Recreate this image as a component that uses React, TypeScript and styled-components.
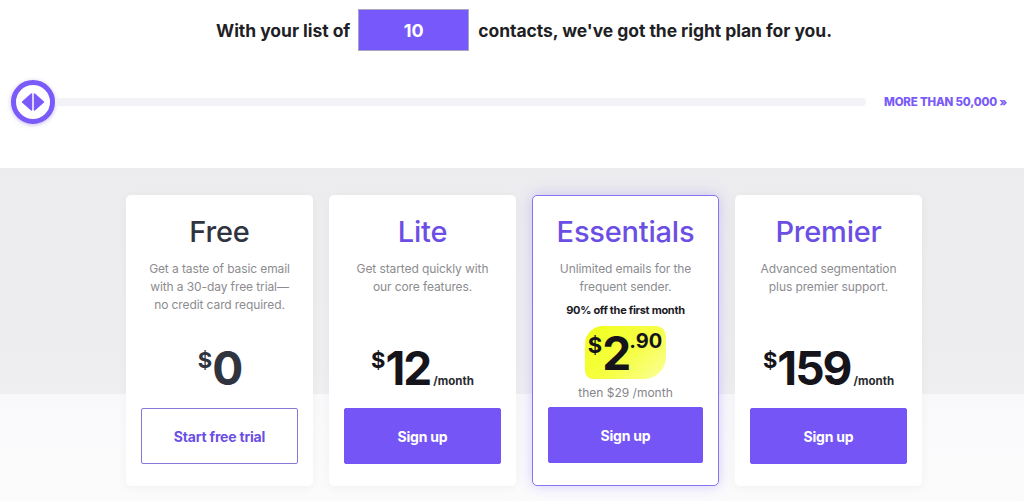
import React from "react";
import styled, { createGlobalStyle, css } from "styled-components";

const GlobalStyle = createGlobalStyle`
  html, body {
    margin: 0;
    padding: 0;
    background: #ffffff;
    font-family: "Inter", "Liberation Sans", sans-serif;
    color: #241c15;
  }
  * { box-sizing: border-box; }
`;

const PURPLE = "#7655f6";

const Page = styled.div`
  width: 1024px;
  height: 501px;
  overflow: hidden;
  display: flex;
  flex-direction: column;
`;

const Headline = styled.div`
  display: flex;
  align-items: center;
  justify-content: center;
  gap: 8px;
  padding-top: 9px;
  padding-left: 24px;
  font-size: 17.5px;
  font-weight: 700;
  letter-spacing: -0.05px;
  color: #1f1f26;
`;

const CountBox = styled.div`
  width: 111px;
  height: 42px;
  display: flex;
  align-items: center;
  justify-content: center;
  background: #7758fa;
  border: 1px solid #a9a6c4;
  color: #ffffff;
  font-size: 18px;
  font-weight: 700;
  margin-right: 1px;
`;

const SliderRow = styled.div`
  display: flex;
  align-items: center;
  margin-top: 29px;
  padding: 0 17px 0 11px;
  height: 44px;
`;

const Knob = styled.div`
  width: 44px;
  height: 44px;
  border-radius: 50%;
  border: 5px solid #7a5af8;
  background: #ffffff;
  box-shadow: 0 1px 4px rgba(90, 60, 200, 0.35);
  display: flex;
  align-items: center;
  justify-content: center;
  flex-shrink: 0;
`;

const Track = styled.div`
  flex: 1;
  height: 8px;
  background: #f3f3f7;
  border-radius: 4px;
  margin-right: 18px;
`;

const MoreLink = styled.span`
  font-size: 11.5px;
  font-weight: 800;
  letter-spacing: -0.2px;
  color: #7a5af8;
`;

const Band = styled.section`
  margin-top: 44px;
  flex: 1;
  background: linear-gradient(
    to bottom,
    #ececef 0px,
    #eeeef1 200px,
    #efeff2 226px,
    #f9f9fb 226px,
    #fbfbfc 100%
  );
  padding: 27px 0 0 126px;
`;

const CardRow = styled.div`
  display: flex;
  gap: 16px;
`;

const Card = styled.div<{ $featured?: boolean }>`
  width: 187px;
  height: 291px;
  background: #ffffff;
  border-radius: 5px;
  display: flex;
  flex-direction: column;
  align-items: center;
  padding: 18px 15px 22px;
  box-shadow: 0 2px 10px rgba(30, 30, 60, 0.04);
  ${(p) =>
    p.$featured &&
    css`
      border: 1px solid #8b72ee;
      box-shadow: 0 0 14px rgba(118, 85, 246, 0.28);
      padding-top: 17px;
    `}
`;

const Title = styled.h2<{ $dark?: boolean }>`
  margin: 0;
  font-size: 29px;
  font-weight: 500;
  letter-spacing: -0.2px;
  line-height: 38px;
  color: ${(p) => (p.$dark ? "#30343f" : "#6b4fe4")};
`;

const Description = styled.p`
  margin: 9px 0 0;
  font-size: 12px;
  line-height: 18px;
  color: #8c8c90;
  text-align: center;
  letter-spacing: -0.1px;
`;

const PriceArea = styled.div`
  margin-top: auto;
  display: flex;
  flex-direction: column;
  align-items: center;
  width: 100%;
`;

const Offer = styled.div`
  font-size: 11px;
  font-weight: 700;
  line-height: 14px;
  color: #1a1a1f;
  letter-spacing: -0.3px;
  margin-bottom: 9px;
`;

const Price = styled.div<{ $dark?: boolean }>`
  display: flex;
  align-items: flex-start;
  color: ${(p) => (p.$dark ? "#30343f" : "#15141a")};
  margin-bottom: 14px;
`;

const Highlight = styled.div`
  display: flex;
  align-items: flex-start;
  height: 53px;
  color: #15141a;
  padding: 1px 4px 0 3px;
  border-radius: 18px 10px 22px 8px;
  background: linear-gradient(135deg, #f0ff1a 0%, #f6ff45 55%, #fbff9a 100%);
`;

const Currency = styled.span`
  font-size: 22px;
  font-weight: 700;
  line-height: 28px;
  margin-top: 4px;
`;

const Amount = styled.span`
  font-size: 46px;
  font-weight: 700;
  line-height: 52px;
  letter-spacing: -2px;
`;

const Cents = styled.span`
  font-size: 20px;
  font-weight: 700;
  line-height: 24px;
  margin-top: 2px;
`;

const Period = styled.span`
  font-size: 11.5px;
  font-weight: 700;
  align-self: flex-end;
  margin: 0 0 6px 3px;
  color: #2a2a30;
`;

const Then = styled.div`
  font-size: 12px;
  line-height: 15px;
  color: #86868a;
  margin: 6px 0 7px;
`;

const Button = styled.button<{ $outline?: boolean }>`
  width: 100%;
  height: 56px;
  border-radius: 2px;
  font-family: inherit;
  font-size: 14px;
  font-weight: 700;
  letter-spacing: -0.2px;
  cursor: pointer;
  border: 1px solid ${PURPLE};
  background: ${(p) => (p.$outline ? "#ffffff" : PURPLE)};
  color: ${(p) => (p.$outline ? "#6b4fe4" : "#ffffff")};
  ${(p) =>
    p.$outline &&
    css`
      border-color: #8a78d6;
    `}
`;

const KnobIcon = () => (
  <svg width="24" height="20" viewBox="0 0 24 20">
    <path d="M10.5 2 L10.5 18 L1.5 10 Z" fill="#7a5af8" strokeLinejoin="round" stroke="#7a5af8" strokeWidth="1.5" />
    <path d="M13.5 2 L13.5 18 L22.5 10 Z" fill="#7a5af8" strokeLinejoin="round" stroke="#7a5af8" strokeWidth="1.5" />
  </svg>
);

export default function App() {
  return (
    <Page>
      <GlobalStyle />
      <Headline>
        <span>With your list of</span>
        <CountBox>10</CountBox>
        <span>contacts, we've got the right plan for you.</span>
      </Headline>

      <SliderRow>
        <Knob>
          <KnobIcon />
        </Knob>
        <Track />
        <MoreLink>MORE THAN 50,000 »</MoreLink>
      </SliderRow>

      <Band>
        <CardRow>
          <Card>
            <Title $dark>Free</Title>
            <Description>
              Get a taste of basic email
              <br />
              with a 30-day free trial—
              <br />
              no credit card required.
            </Description>
            <PriceArea>
              <Price $dark>
                <Currency>$</Currency>
                <Amount>0</Amount>
              </Price>
              <Button $outline>Start free trial</Button>
            </PriceArea>
          </Card>

          <Card>
            <Title>Lite</Title>
            <Description>
              Get started quickly with
              <br />
              our core features.
            </Description>
            <PriceArea>
              <Price>
                <Currency>$</Currency>
                <Amount>12</Amount>
                <Period>/month</Period>
              </Price>
              <Button>Sign up</Button>
            </PriceArea>
          </Card>

          <Card $featured>
            <Title>Essentials</Title>
            <Description>
              Unlimited emails for the
              <br />
              frequent sender.
            </Description>
            <PriceArea>
              <Offer>90% off the first month</Offer>
              <Highlight>
                <Currency>$</Currency>
                <Amount>2</Amount>
                <Cents>.90</Cents>
              </Highlight>
              <Then>then $29 /month</Then>
              <Button>Sign up</Button>
            </PriceArea>
          </Card>

          <Card>
            <Title>Premier</Title>
            <Description>
              Advanced segmentation
              <br />
              plus premier support.
            </Description>
            <PriceArea>
              <Price>
                <Currency>$</Currency>
                <Amount>159</Amount>
                <Period>/month</Period>
              </Price>
              <Button>Sign up</Button>
            </PriceArea>
          </Card>
        </CardRow>
      </Band>
    </Page>
  );
}
